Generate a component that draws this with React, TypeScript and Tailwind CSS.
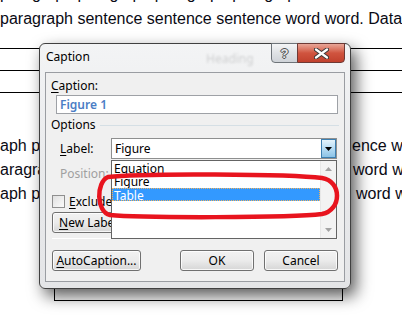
import React from "react";

const ui = "font-['Noto_Sans','Liberation_Sans',sans-serif] text-[12px] text-black";

function WinButton({ children, className = "" }: { children: React.ReactNode; className?: string }) {
  return (
    <div
      className={`h-[21px] rounded-[3px] border border-[#707070] bg-gradient-to-b from-[#f2f2f2] via-[#ebebeb] to-[#d6d6d6] flex items-center justify-center leading-none shadow-[inset_0_0_0_1px_rgba(255,255,255,0.8)] ${className}`}
    >
      {children}
    </div>
  );
}

function BodyLine({ left, right, rightStart }: { left: string; right: string; rightStart: string }) {
  return (
    <div className="flex h-[24px] whitespace-nowrap overflow-hidden">
      <span className={`${rightStart} shrink-0 overflow-hidden`}>{left}</span>
      <span>{right}</span>
    </div>
  );
}

export default function App() {
  return (
    <div className="relative w-[402px] h-[333px] overflow-hidden bg-white">
      {/* document underneath */}
      <div className="font-['Liberation_Sans',Arial,sans-serif] text-[16px] leading-[24px] text-[#0a0a14]">
        <div className="-mt-[18px] h-[24px] whitespace-nowrap overflow-hidden">paragraph paragraph paragraph paragraph sentence</div>
        <div className="mt-[1px] h-[24px] whitespace-nowrap overflow-hidden">paragraph sentence sentence sentence word word. Data</div>
        <div className="mt-[17px] border-t border-black h-[22px]" />
        <div className="border-t border-black h-[22px]" />
        <div className="border-t border-black h-[42px]" />
        <BodyLine left="aph pa" right="ence word word" rightStart="w-[352px]" />
        <BodyLine left="aragra" right="word word" rightStart="w-[353px]" />
        <BodyLine left="aph p" right="l word word" rightStart="w-[348px]" />
        <div className="ml-[54px] w-[289px] h-[95px] border-x border-b border-black" />
      </div>

      {/* Caption dialog */}
      <div
        className={`absolute left-[39px] top-[43px] w-[312px] h-[246px] rounded-[6px] border border-[#404040] bg-gradient-to-b from-[#f3f4f5] via-[#e9eaec] to-[#e4e5e7] shadow-[5px_7px_16px_rgba(0,0,0,0.65)] flex flex-col ${ui}`}
      >
        {/* title bar */}
        <div className="relative h-[28px] shrink-0">
          <span className="absolute left-[6px] top-[7px] leading-none text-[12px]">Caption</span>
          <span className="absolute left-[166px] top-[9px] text-[12px] text-black/15 blur-[1px] leading-none">Heading</span>
          <div className="absolute right-[5px] -top-px flex h-[20px]">
            <div className="w-[27px] h-full rounded-bl-[4px] border border-[#6e7479] bg-gradient-to-b from-[#f4f5f6] via-[#dfe2e5] to-[#cfd3d8] flex items-center justify-center">
              <span className="font-['Liberation_Sans',sans-serif] text-[13px] font-bold text-[#e6e8ea] leading-none [text-shadow:0_0_1px_#444,1px_0_0_#555,-1px_0_0_#555,0_1px_0_#555,0_-1px_0_#555]">?</span>
            </div>
            <div className="w-[48px] h-full -ml-px rounded-br-[4px] border border-[#6e3a35] bg-gradient-to-b from-[#e8a698] via-[#d0543f] to-[#c1412d] flex items-center justify-center">
              <svg width="15" height="11" viewBox="0 0 15 11">
                <path d="M2 1.5 L13 9.5 M13 1.5 L2 9.5" stroke="#3a3a3a" strokeWidth="4.2" strokeLinecap="round" />
                <path d="M2 1.5 L13 9.5 M13 1.5 L2 9.5" stroke="#ffffff" strokeWidth="2.2" strokeLinecap="round" />
              </svg>
            </div>
          </div>
        </div>

        {/* client area */}
        <div className="relative mx-[5px] h-[210px] border border-[#9a9da2] bg-[#f0f0f0] flex flex-col">
          <div className="pl-[5px] pt-[5px] h-[20px] leading-[16px]">
            <u className="underline-offset-2">C</u>aption:
          </div>
          <div className="mt-[2px] ml-[10px] w-[282px] h-[19px] border border-[#9ea1a6] bg-white flex items-center pl-[3px] text-[#4b7dc5] font-semibold leading-none">
            Figure 1
          </div>
          <div className="mt-[3px] h-[16px] pl-[5px] flex items-center gap-[4px] leading-none">
            <span>Options</span>
            <div className="flex-1 mr-[5px] h-px bg-[#d5dfe5]" />
          </div>
          <div className="mt-[5px] h-[21px] flex items-center">
            <span className="w-[65px] pl-[14px] leading-none">
              <u className="underline-offset-2">L</u>abel:
            </span>
            <div className="w-[226px] h-[21px] border border-[#8e8f8f] bg-white flex items-center">
              <span className="flex-1 pl-[3px] leading-none">Figure</span>
              <div className="w-[15px] h-[19px] border border-[#3c7fb1] bg-gradient-to-b from-[#e5f4fc] via-[#b6dcf4] to-[#8cc3e6] flex items-center justify-center">
                <svg width="7" height="4" viewBox="0 0 7 4">
                  <path d="M0 0 H7 L3.5 4 Z" fill="#000" />
                </svg>
              </div>
            </div>
          </div>
          <div className="mt-[7px] h-[16px] pl-[14px] leading-[16px] text-[#a0a0a0]">Position:</div>
          <div className="mt-[13px] h-[13px] pl-[6px] flex items-center gap-[4px]">
            <div className="w-[13px] h-[13px] border border-[#8f8f8f] bg-gradient-to-br from-[#e0e0e0] to-[#fbfbfb]" />
            <span className="leading-none">
              <u className="underline-offset-2">E</u>xclude l
            </span>
          </div>
          <WinButton className="mt-[4px] ml-[6px] w-[96px] justify-start pl-[6px]">
            <span>
              <u className="underline-offset-2">N</u>ew Labe
            </span>
          </WinButton>
          <div className="mt-[5px] mx-[6px] h-px bg-[#d8d8d8] border-b border-white" />
          <div className="mt-[11px] px-[6px] flex items-center">
            <WinButton className="w-[89px]">
              <span>
                <u className="underline-offset-2">A</u>utoCaption...
              </span>
            </WinButton>
            <WinButton className="ml-auto w-[74px]">OK</WinButton>
            <WinButton className="ml-[10px] w-[74px]">Cancel</WinButton>
          </div>

          {/* open dropdown list */}
          <div className="absolute left-[65px] top-[87px] w-[226px] h-[79px] border border-[#646464] bg-white flex">
            <div className="flex-1 flex flex-col pt-px leading-[13px]">
              <div className="h-[13px] pl-[2px]">Equation</div>
              <div className="h-[13px] pl-[2px]">Figure</div>
              <div className="h-[13px] pl-[1px] bg-[#3399ff] text-white border border-dotted border-[#f2b25c]">Table</div>
            </div>
            <div className="w-[16px] bg-[#f3f3f3] border-l border-[#e8e8e8] flex flex-col items-center justify-between py-[6px]">
              <svg width="7" height="4" viewBox="0 0 7 4">
                <path d="M0 4 H7 L3.5 0 Z" fill="#a3a3a3" />
              </svg>
              <svg width="7" height="4" viewBox="0 0 7 4">
                <path d="M0 0 H7 L3.5 4 Z" fill="#a3a3a3" />
              </svg>
            </div>
          </div>
        </div>
      </div>

      {/* red annotation */}
      <svg className="absolute left-0 top-0 pointer-events-none" width="402" height="333" viewBox="0 0 402 333">
        <path
          d="M108 177 C140 173 290 174 322 178 C342 181 342 210 322 214 C290 218 140 218 110 215 C96 212 96 182 108 177 Z"
          fill="none"
          stroke="#e8141e"
          strokeWidth="4.5"
          strokeLinejoin="round"
        />
      </svg>
    </div>
  );
}
